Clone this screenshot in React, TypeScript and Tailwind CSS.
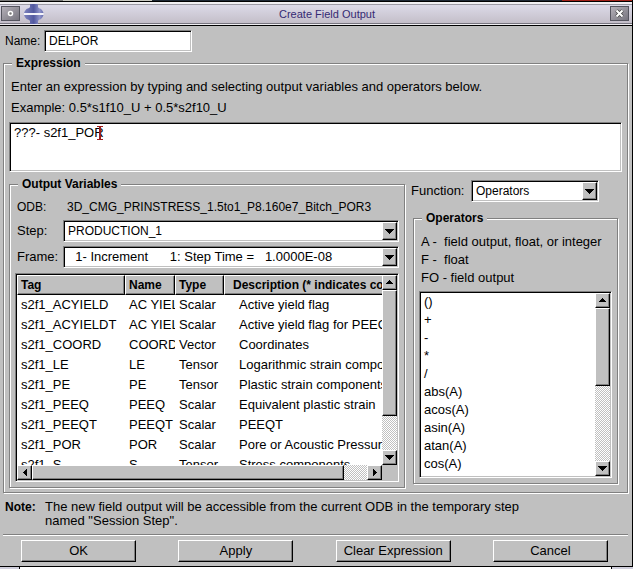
import { ReactNode, useState } from 'react';
import { clsx } from 'clsx';

const sunken =
  'border border-t-[#808080] border-l-[#808080] border-b-white border-r-white p-px shadow-[inset_1px_1px_0_#000,inset_-1px_-1px_0_#c0c0c0]';
const raised =
  'border border-t-white border-l-white border-b-black border-r-black bg-[#c0c0c0] shadow-[inset_-1px_-1px_0_#808080]';
const trough =
  'bg-[conic-gradient(#fff_25%,#c0c0c0_0_50%,#fff_0_75%,#c0c0c0_0)] bg-[length:2px_2px]';

const variables = [
  ['s2f1_ACYIELD', 'AC YIELD', 'Scalar', 'Active yield flag'],
  ['s2f1_ACYIELDT', 'AC YIELDT', 'Scalar', 'Active yield flag for PEEQT'],
  ['s2f1_COORD', 'COORD', 'Vector', 'Coordinates'],
  ['s2f1_LE', 'LE', 'Tensor', 'Logarithmic strain components'],
  ['s2f1_PE', 'PE', 'Tensor', 'Plastic strain components'],
  ['s2f1_PEEQ', 'PEEQ', 'Scalar', 'Equivalent plastic strain'],
  ['s2f1_PEEQT', 'PEEQT', 'Scalar', 'PEEQT'],
  ['s2f1_POR', 'POR', 'Scalar', 'Pore or Acoustic Pressure'],
  ['s2f1_S', 'S', 'Tensor', 'Stress components'],
];

const operators = ['()', '+', '-', '*', '/', 'abs(A)', 'acos(A)', 'asin(A)', 'atan(A)', 'cos(A)'];

const arrows = {
  up: 'M4 0h1v1h1v1h1v1h1v1H1V3h1V2h1V1h1z',
  down: 'M0 0h9v1H8v1H7v1H6v1H5v1H4V4H3V3H2V2H1V1H0z',
  left: 'M4 0v7H3V6H2V5H1V4H0V3h1V2h1V1h1V0z',
  right: 'M0 0v7h1V6h1V5h1V4h1V3H3V2H2V1H1V0z',
};

function Arrow({ dir }: { dir: keyof typeof arrows }) {
  const flat = dir === 'up' || dir === 'down';
  return (
    <svg
      width={flat ? 9 : 4}
      height={flat ? 5 : 7}
      viewBox={flat ? '0 0 9 5' : '0 0 4 7'}
      shapeRendering="crispEdges"
      aria-hidden="true"
    >
      <path d={arrows[dir]} />
    </svg>
  );
}

function ScrollBar({ horizontal, thumb }: { horizontal?: boolean; thumb: string }) {
  const button = clsx(raised, 'flex size-[15px] shrink-0 items-center justify-center');
  return (
    <div className={clsx('flex shrink-0', horizontal ? 'h-[15px]' : 'w-[15px] flex-col')}>
      <button type="button" aria-label={horizontal ? 'Scroll left' : 'Scroll up'} className={button}>
        <Arrow dir={horizontal ? 'left' : 'up'} />
      </button>
      <div className={clsx('min-h-0 min-w-0 flex-1', trough)}>
        <div className={clsx(raised, thumb)} />
      </div>
      <button type="button" aria-label={horizontal ? 'Scroll right' : 'Scroll down'} className={button}>
        <Arrow dir={horizontal ? 'right' : 'down'} />
      </button>
    </div>
  );
}

function Group({ title, className, children }: { title: string; className?: string; children: ReactNode }) {
  return (
    <fieldset
      className={clsx(
        'min-w-0 border border-[#808080] shadow-[1px_1px_0_#fff,inset_1px_1px_0_#fff]',
        className
      )}
    >
      <legend className="ml-[3px] bg-[#c0c0c0] px-1 text-xs font-bold leading-4">{title}</legend>
      {children}
    </fieldset>
  );
}

function Combo({ id, value, className }: { id: string; value: string; className?: string }) {
  return (
    <div className={clsx(sunken, 'relative flex h-[22px] min-w-0 bg-white', className)}>
      <select id={id} className="w-full min-w-0 appearance-none bg-white pl-[3px] pr-4 outline-none">
        <option>{value}</option>
      </select>
      <span
        className={clsx(
          raised,
          'pointer-events-none absolute inset-y-px right-px flex w-[15px] items-center justify-center'
        )}
      >
        <Arrow dir="down" />
      </span>
    </div>
  );
}

function TitleBar() {
  const button =
    'flex h-[15px] w-[19px] items-center justify-center border border-[#55555f] bg-linear-to-br from-[#b4b0b8] to-[#77757f]';
  return (
    <header className="flex h-[25px] items-center border-y border-black bg-[#f0eff2] text-[11px] text-[#352a73]">
      <div className="flex h-[20px] w-full items-center border-y border-t-[#9c9aa4] border-b-[#77757f] bg-linear-to-b from-[#dcdae8] to-[#c4bfc9] pl-px pr-[3px]">
        <button type="button" aria-label="Window menu" className={button}>
          <svg width="7" height="7" viewBox="0 0 7 7" aria-hidden="true">
            <circle cx="3.5" cy="3.5" r="2" fill="#777" stroke="#fff" strokeWidth="1.5" />
          </svg>
        </button>
        <svg width="20" height="20" viewBox="0 0 20 20" className="ml-1" aria-hidden="true">
          <defs>
            <linearGradient id="logo">
              <stop offset="0" stopColor="#7d83bd" />
              <stop offset="0.5" stopColor="#5259a0" />
              <stop offset="0.8" stopColor="#8f94ca" />
              <stop offset="1" stopColor="#656bad" />
            </linearGradient>
          </defs>
          <path
            d="M6 0h8v3q0 1 3 2 2 2 2.500 4H0Q.5 7 2.500 5 6 4 6 3zM0 11h19.500q-.5 2-2.500 4-3 1-3 2v3H6v-3q0-1-3.500-2Q.5 13 0 11z"
            fill="url(#logo)"
          />
          <path d="M0 9h19.500v2H0z" fill="#f4f4fb" />
        </svg>
        <h1 className="flex-1 text-center">Create Field Output</h1>
        <button type="button" aria-label="Close" className={button}>
          <svg width="9" height="9" viewBox="0 0 9 9" aria-hidden="true">
            <path d="M1.500 1.500l6 6M7.500 1.500l-6 6" stroke="#444" strokeWidth="3.500" />
            <path d="M1.500 1.500l6 6M7.500 1.500l-6 6" stroke="#fff" strokeWidth="2" />
          </svg>
        </button>
      </div>
    </header>
  );
}

function VariableTable() {
  return (
    <div className={clsx(sunken, 'mt-[5px] flex h-[209px] flex-col bg-[#c0c0c0]')}>
      <div className="flex min-h-0 flex-1">
        <div className="min-w-0 flex-1 overflow-hidden bg-white">
          <table className="w-[480px] table-fixed border-separate border-spacing-0 text-left">
            <colgroup>
              <col className="w-[108px]" />
              <col className="w-[50px]" />
              <col className="w-[49px]" />
              <col />
            </colgroup>
            <thead>
              <tr className="h-5">
                {['Tag', 'Name', 'Type', 'Description (* indicates complex)'].map((label, i) => (
                  <th
                    key={label}
                    className={clsx(
                      raised,
                      'overflow-hidden whitespace-nowrap py-0 pr-0 text-xs leading-[18px]',
                      i === 3 ? 'pl-2' : 'pl-[3px]'
                    )}
                  >
                    {label}
                  </th>
                ))}
              </tr>
            </thead>
            <tbody>
              {variables.map((row) => (
                <tr key={row[0]} className="h-5">
                  {row.map((cell, i) => (
                    <td
                      key={i}
                      className={clsx(
                        'overflow-hidden whitespace-nowrap py-0 pr-0 leading-5',
                        i === 3 ? 'pl-[15px]' : 'pl-1'
                      )}
                    >
                      {cell}
                    </td>
                  ))}
                </tr>
              ))}
            </tbody>
          </table>
        </div>
        <ScrollBar thumb="h-[79%]" />
      </div>
      <div className="pr-[15px]">
        <ScrollBar horizontal thumb="h-full w-[93%]" />
      </div>
    </div>
  );
}

export default function App() {
  const [name, setName] = useState('DELPOR');
  const [expression, setExpression] = useState('???- s2f1_POR');

  return (
    <div className="bg-white font-['Liberation_Sans',Arial,sans-serif] text-[13px] leading-4 text-black">
      <div className="border-b border-r border-black bg-[#c0c0c0]">
        <div className="flex h-px">
          <div className="w-[10%] bg-[#777]" />
          <div className="w-[14%] bg-[#c8c8c0]" />
          <div className="flex-1 bg-[#1d2733]" />
          <div className="w-[11%] bg-[#a02018]" />
        </div>
        <TitleBar />

        <form className="pb-1" onSubmit={(e) => e.preventDefault()}>
          <div className="flex items-center pl-[5px] pt-1 text-xs">
            <label htmlFor="name" className="w-[39px]">Name:</label>
            <input
              id="name"
              value={name}
              onChange={(e) => setName(e.target.value)}
              className={clsx(sunken, 'h-[22px] w-[148px] bg-white pl-1 outline-none')}
            />
          </div>

          <Group title="Expression" className="ml-[3px] mr-1 mt-[3px] px-[5px] pb-1">
            <label htmlFor="expression" className="block pl-[2px] pt-2">
              <span className="block">
                Enter an expression by typing and selecting output variables and operators below.
              </span>
              <span className="mt-[5px] block">Example: 0.5*s1f10_U + 0.5*s2f10_U</span>
            </label>
            <div className="relative mt-[6px]">
              <textarea
                id="expression"
                value={expression}
                onChange={(e) => setExpression(e.target.value)}
                className={clsx(sunken, 'block h-[50px] w-full resize-none bg-white pl-1 pt-[2px] outline-none')}
              />
              <svg
                width="6"
                height="14"
                viewBox="0 0 6 14"
                className="pointer-events-none absolute left-[88px] top-1"
                aria-hidden="true"
              >
                <path d="M0 0h6v1H4v12h2v1H0v-1h2V1H0z" fill="#9c1c1c" />
              </svg>
            </div>

            <div className="mt-1 flex items-start gap-[6px]">
              <Group title="Output Variables" className="flex-1 px-[5px] pb-[5px]">
                <div className="flex pl-[2px] pt-[7px] text-xs leading-4">
                  <span className="w-[50px]">ODB:</span>
                  <span>3D_CMG_PRINSTRESS_1.5to1_P8.160e7_Bitch_POR3</span>
                </div>
                <div className="mt-[5px] flex items-center pl-[2px]">
                  <label htmlFor="step" className="w-[46px]">Step:</label>
                  <Combo id="step" value="PRODUCTION_1" className="flex-1 text-xs" />
                </div>
                <div className="mt-1 flex items-center pl-[2px]">
                  <label htmlFor="frame" className="w-[46px]">Frame:</label>
                  <Combo
                    id="frame"
                    value={'\u00a0\u00a01- Increment\u00a0\u00a0\u00a0\u00a0\u00a0\u00a01: Step Time =\u00a0\u00a0\u00a01.0000E-08'}
                    className="flex-1"
                  />
                </div>
                <VariableTable />
              </Group>

              <div className="w-[211px] pt-1">
                <div className="flex items-center">
                  <label htmlFor="function" className="w-[60px]">Function:</label>
                  <Combo id="function" value="Operators" className="w-[128px] text-xs" />
                </div>
                <Group title="Operators" className="ml-[2px] mr-1 mt-2 px-[5px] pb-[5px]">
                  <div className="whitespace-pre pl-[2px] pt-[7px] leading-[18px]">
                    <p>A -  field output, float, or integer</p>
                    <p>F -  float</p>
                    <p>FO - field output</p>
                  </div>
                  <div className={clsx(sunken, 'mt-1 flex h-[187px] bg-white')}>
                    <ul className="min-w-0 flex-1 overflow-hidden pl-[3px] leading-[18px]">
                      {operators.map((op) => (
                        <li key={op}>{op}</li>
                      ))}
                    </ul>
                    <ScrollBar thumb="h-[51%]" />
                  </div>
                </Group>
              </div>
            </div>
          </Group>

          <div className="mt-[7px] flex pl-[5px] leading-[14px]">
            <strong className="w-10 text-xs leading-[14px]">Note:</strong>
            <p>
              The new field output will be accessible from the current ODB in the temporary step
              <br />
              named "Session Step".
            </p>
          </div>

          <hr className="ml-[3px] mr-1 mt-[6px] h-[2px] border-b border-t border-b-white border-t-[#808080]" />

          <div className="mr-[3px] mt-1 flex justify-around">
            {['OK', 'Apply', 'Clear Expression', 'Cancel'].map((label) => (
              <button key={label} type="button" className={clsx(raised, 'h-[22px] w-[115px]')}>
                {label}
              </button>
            ))}
          </div>
        </form>
      </div>
      <div className="flex h-[2px] justify-between">
        <div className="w-5 border-r border-black bg-[#d0cfdc]" />
        <div className="w-[22px] border-l border-black bg-[#d0cfdc]" />
      </div>
    </div>
  );
}
